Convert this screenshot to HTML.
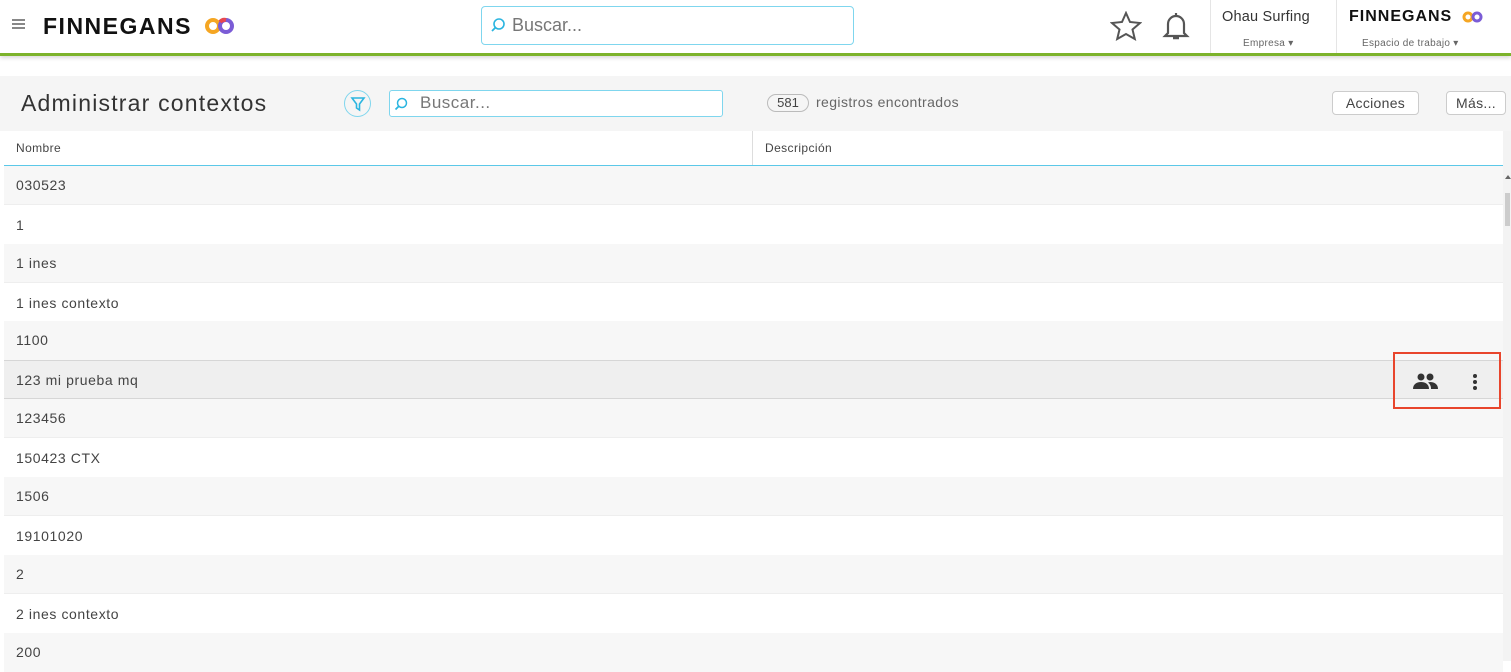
<!DOCTYPE html>
<html><head><meta charset="utf-8"><style>
*{box-sizing:border-box;margin:0;padding:0}
body{width:1511px;height:661px;overflow:hidden;background:#fff;font-family:"Liberation Sans",sans-serif;color:#333;position:relative}
.top{position:absolute;left:0;top:0;width:1511px;height:56px;background:#fff;border-bottom:3px solid #7cb32b;box-shadow:0 2px 4px rgba(0,0,0,.15)}
.abs{position:absolute}
.logo{font-weight:bold;color:#111}
.sub{position:absolute;left:0;top:76px;width:1511px;height:55px;background:#f5f5f5}
.btn{position:absolute;height:24px;border:1px solid #ccc;border-radius:4px;background:#fff;font-size:14px;color:#444;text-align:center;line-height:22px;letter-spacing:.3px}
.hdr{position:absolute;left:4px;top:131px;width:1499px;height:35px;background:#fff;border-bottom:1px solid #5bc8e8}
.row{position:absolute;left:4px;width:1499px;font-size:14px;color:#444;padding-left:12px;letter-spacing:.6px}
</style></head><body>
<div class="top">
 <div class="abs" style="left:12px;top:19px;width:13px;height:2px;background:#888;box-shadow:0 4px 0 #888,0 8px 0 #888"></div>
 <div class="abs logo" style="left:43px;top:13px;font-size:23px;letter-spacing:1.5px">FINNEGANS</div>
 <svg class="abs" style="left:204px;top:16px" width="32" height="20"><circle cx="9" cy="10" r="6" fill="none" stroke="#f5a623" stroke-width="4"/><circle cx="22" cy="10" r="6" fill="none" stroke="#7b5cd6" stroke-width="4"/><path d="M16 6a6 6 0 0 1 6-2" stroke="#e8484f" stroke-width="4" fill="none"/></svg>
 <div class="abs" style="left:481px;top:6px;width:373px;height:39px;border:1px solid #7fd6ee;border-radius:4px"></div>
 <svg class="abs" style="left:490px;top:17px" width="16" height="16"><circle cx="9" cy="7" r="5" fill="none" stroke="#2bb5e0" stroke-width="1.6"/><path d="M5.5 10.5L2 14" stroke="#2bb5e0" stroke-width="1.8"/></svg>
 <div class="abs" style="left:512px;top:15px;font-size:18px;color:#777">Buscar...</div>
 <svg class="abs" style="left:1110px;top:11px" width="32" height="30"><path d="M16 2l4 9 10 1-7.5 6.5 2.3 9.5L16 23l-8.8 5 2.3-9.5L2 12l10-1z" fill="none" stroke="#555" stroke-width="2"/></svg>
 <svg class="abs" style="left:1162px;top:10px" width="28" height="32"><path d="M14 3v2M6 23V14a8 8 0 0 1 16 0v9l3 3H3z" fill="none" stroke="#555" stroke-width="2.2"/><path d="M11 28h6" stroke="#555" stroke-width="2.5"/></svg>
 <div class="abs" style="left:1210px;top:0;width:1px;height:53px;background:#e5e5e5"></div>
 <div class="abs" style="left:1336px;top:0;width:1px;height:53px;background:#e5e5e5"></div>
 <div class="abs" style="left:1222px;top:9px;font-size:14.5px;color:#333;letter-spacing:.2px">Ohau Surfing</div>
 <div class="abs" style="left:1243px;top:38px;font-size:10px;color:#666;letter-spacing:.3px">Empresa ▾</div>
 <div class="abs logo" style="left:1349px;top:8px;font-size:16px;letter-spacing:1px">FINNEGANS</div>
 <svg class="abs" style="left:1462px;top:10px" width="22" height="14"><circle cx="6" cy="7" r="4" fill="none" stroke="#f5a623" stroke-width="3"/><circle cx="15" cy="7" r="4" fill="none" stroke="#7b5cd6" stroke-width="3"/></svg>
 <div class="abs" style="left:1362px;top:38px;font-size:10px;color:#666;letter-spacing:.3px">Espacio de trabajo ▾</div>
</div>
<div class="sub">
 <div class="abs" style="left:21px;top:14px;font-size:23px;color:#333;letter-spacing:1.2px">Administrar contextos</div>
 <div class="abs" style="left:344px;top:14px;width:27px;height:27px;border:1.5px solid #7fd6ee;border-radius:50%"></div>
 <svg class="abs" style="left:350px;top:20px" width="16" height="16"><path d="M2 2h12l-4.5 6v6l-3-2V8z" fill="none" stroke="#2bb5e0" stroke-width="1.6"/></svg>
 <div class="abs" style="left:389px;top:14px;width:334px;height:27px;border:1px solid #7fd6ee;border-radius:3px;background:#fff"></div>
 <svg class="abs" style="left:393px;top:20px" width="16" height="16"><circle cx="9" cy="7" r="4.5" fill="none" stroke="#2bb5e0" stroke-width="1.5"/><path d="M6 10L2.5 13.5" stroke="#2bb5e0" stroke-width="1.8"/></svg>
 <div class="abs" style="left:420px;top:17px;font-size:17px;color:#777;letter-spacing:.5px">Buscar...</div>
 <div class="abs" style="left:767px;top:18px;width:42px;height:18px;border:1px solid #bbb;border-radius:9px;font-size:13px;text-align:center;line-height:16px;color:#444">581</div>
 <div class="abs" style="left:816px;top:18px;font-size:14px;color:#666;letter-spacing:.4px">registros encontrados</div>
 <div class="btn" style="left:1332px;top:15px;width:87px">Acciones</div>
 <div class="btn" style="left:1446px;top:15px;width:60px">Más...</div>
</div>
<div class="hdr">
 <div class="abs" style="left:12px;top:10px;font-size:12px;color:#444;letter-spacing:.4px">Nombre</div>
 <div class="abs" style="left:748px;top:0;width:1px;height:34px;background:#ddd"></div>
 <div class="abs" style="left:761px;top:10px;font-size:12px;color:#444;letter-spacing:.4px">Descripción</div>
</div>
<div class="abs" style="left:1503px;top:131px;width:8px;height:530px;background:#f3f3f3"></div>
<div class="abs" style="left:1505px;top:193px;width:5px;height:33px;background:#ccc"></div>
<div class="abs" style="left:1505px;top:172px;width:0;height:0;border:3px solid transparent;border-bottom:4px solid #666"></div>

<div class="row" style="top:166px;height:39px;background:#f7f7f7;line-height:38px;border-bottom:1px solid #eee">030523</div>
<div class="row" style="top:205px;height:39px;background:#fff;line-height:40px">1</div>
<div class="row" style="top:244px;height:39px;background:#f7f7f7;line-height:38px;border-bottom:1px solid #eee">1 ines</div>
<div class="row" style="top:283px;height:38px;background:#fff;line-height:40px">1 ines contexto</div>
<div class="row" style="top:321px;height:39px;background:#f7f7f7;line-height:38px">1100</div>
<div class="row" style="top:360px;height:39px;background:#efefef;line-height:38px;border-top:1px solid #d6d6d6;border-bottom:1px solid #d6d6d6">123 mi prueba mq</div>
<div class="row" style="top:399px;height:39px;background:#f7f7f7;line-height:38px;border-bottom:1px solid #eee">123456</div>
<div class="row" style="top:438px;height:39px;background:#fff;line-height:40px">150423 CTX</div>
<div class="row" style="top:477px;height:39px;background:#f7f7f7;line-height:38px;border-bottom:1px solid #eee">1506</div>
<div class="row" style="top:516px;height:39px;background:#fff;line-height:40px">19101020</div>
<div class="row" style="top:555px;height:39px;background:#f7f7f7;line-height:38px;border-bottom:1px solid #eee">2</div>
<div class="row" style="top:594px;height:39px;background:#fff;line-height:40px">2 ines contexto</div>
<div class="row" style="top:633px;height:39px;background:#f7f7f7;line-height:38px">200</div>

<div class="abs" style="left:1393px;top:352px;width:108px;height:57px;border:2px solid #e8452c"></div>
<svg class="abs" style="left:1412px;top:372px" width="28" height="18"><circle cx="9" cy="5" r="3.5" fill="#333"/><circle cx="18" cy="5" r="3.5" fill="#333"/><path d="M1 17c0-5 4-7 8-7s8 2 8 7z" fill="#333"/><path d="M18 10c4 0 8 2 8 7h-7c0-3-1-5-3-6.5z" fill="#333"/></svg>
<svg class="abs" style="left:1471px;top:373px" width="8" height="20"><circle cx="4" cy="3" r="2" fill="#333"/><circle cx="4" cy="9" r="2" fill="#333"/><circle cx="4" cy="15" r="2" fill="#333"/></svg>
</body></html>
